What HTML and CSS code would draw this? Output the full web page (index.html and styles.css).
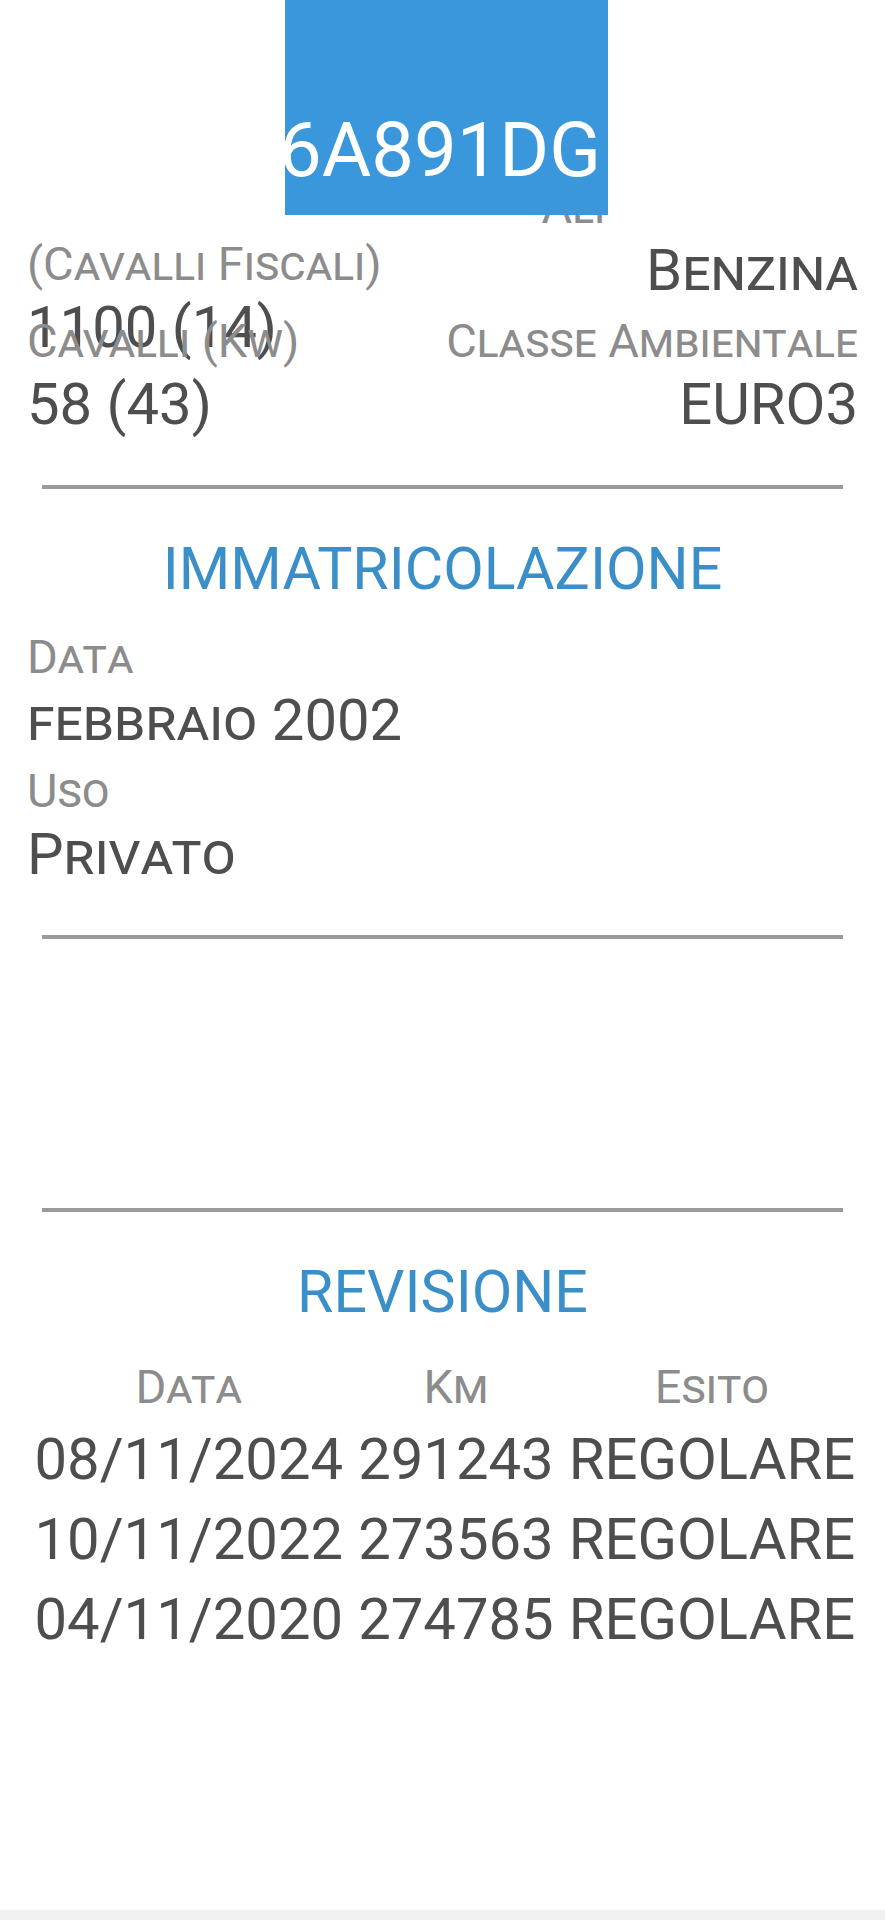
FILE: index.html
```html
<!DOCTYPE html>
<html lang="it">
<head>
<meta charset="utf-8">
<title>Veicolo 6A891DG</title>
<link rel="stylesheet" href="styles.css">
</head>
<body>
<div class="page">
  <header class="topbar">
    <div class="pane pane-left"></div>
    <div class="plate"><span class="plate-text">6A891DG</span></div>
    <div class="pane pane-right"></div>
  </header>

  <main class="content">
    <div class="info-grid">
      <div class="field">
        <div class="label">Cilindrata <span class="nowrap">(Cavalli Fiscali)</span></div>
        <div class="value">1100 (14)</div>
      </div>
      <div class="field field-right">
        <div class="label">Alimentazione</div>
        <div class="value">Benzina</div>
      </div>
      <div class="field">
        <div class="label">Cavalli (Kw)</div>
        <div class="value">58 (43)</div>
      </div>
      <div class="field field-right">
        <div class="label">Classe Ambientale</div>
        <div class="value">EURO3</div>
      </div>
    </div>

    <hr class="divider">

    <section class="section">
      <h2 class="section-title">IMMATRICOLAZIONE</h2>
      <div class="fields">
        <div class="field">
          <div class="label">Data</div>
          <div class="value">febbraio 2002</div>
        </div>
        <div class="field">
          <div class="label">Uso</div>
          <div class="value">Privato</div>
        </div>
      </div>
    </section>

    <hr class="divider">

    <section class="section empty-section"></section>

    <hr class="divider">

    <section class="section">
      <h2 class="section-title">REVISIONE</h2>
      <table class="rev-table">
        <thead>
          <tr><th>Data</th><th>Km</th><th>Esito</th></tr>
        </thead>
        <tbody>
          <tr><td>08/11/2024</td><td>291243</td><td>REGOLARE</td></tr>
          <tr><td>10/11/2022</td><td>273563</td><td>REGOLARE</td></tr>
          <tr><td>04/11/2020</td><td>274785</td><td>REGOLARE</td></tr>
        </tbody>
      </table>
    </section>
  </main>
</div>
</body>
</html>
```

FILE: styles.css
```css
* {
  box-sizing: border-box;
}

html, body {
  margin: 0;
  padding: 0;
}

body {
  background: #f0f0f2;
  font-family: Roboto, "Liberation Sans", Arial, sans-serif;
}

.page {
  position: relative;
  background: #ffffff;
  height: 1910px;
  overflow: hidden;
}

/* top header overlay */
.topbar {
  position: absolute;
  top: 0;
  left: 0;
  right: 0;
  display: flex;
  align-items: flex-start;
  z-index: 2;
}

.pane {
  height: 226px;
  background: #ffffff;
}

.pane-left {
  width: 285px;
}

.pane-right {
  flex: 1;
}

.plate {
  width: 323px;
  height: 215px;
  background: #3a97db;
  display: flex;
  justify-content: flex-end;
  align-items: flex-end;
  overflow: hidden;
  padding: 0 7px 21px 0;
}

.plate-text {
  color: #ffffff;
  font-size: 76px;
  line-height: 88px;
  white-space: nowrap;
}

/* content */
.content {
  padding: 178px 27px 0;
}

.info-grid {
  display: grid;
  grid-template-columns: 1fr 1fr;
  grid-auto-rows: 128px;
  row-gap: 6px;
}

.fields {
  display: flex;
  flex-direction: column;
  gap: 6px;
  margin-top: 24px;
}

.field {
  min-width: 0;
}

.field-right {
  text-align: right;
}

.label {
  color: #8c8c8c;
  font-size: 47px;
  line-height: 57px;
  font-variant: small-caps;
}

.value {
  color: #4e4e4e;
  font-size: 58px;
  line-height: 71px;
  font-variant: small-caps;
}

.nowrap {
  white-space: nowrap;
}

.divider {
  border: 0;
  height: 4px;
  background: #9a9a9a;
  margin: 45px 15px 0;
}

.section-title {
  margin: 44px 0 0;
  text-align: center;
  color: #3a8fc9;
  font-size: 59px;
  line-height: 71px;
  font-weight: 400;
}

.empty-section {
  height: 224px;
}

.rev-table {
  margin: 26px auto 0;
  border-collapse: collapse;
}

.rev-table th {
  color: #8c8c8c;
  font-size: 47px;
  line-height: 57px;
  font-weight: 400;
  font-variant: small-caps;
  padding: 4.5px 7.5px;
  text-align: center;
}

.rev-table td {
  color: #4e4e4e;
  font-size: 58px;
  line-height: 71px;
  padding: 4.5px 7.5px;
  text-align: center;
  white-space: nowrap;
}
```
